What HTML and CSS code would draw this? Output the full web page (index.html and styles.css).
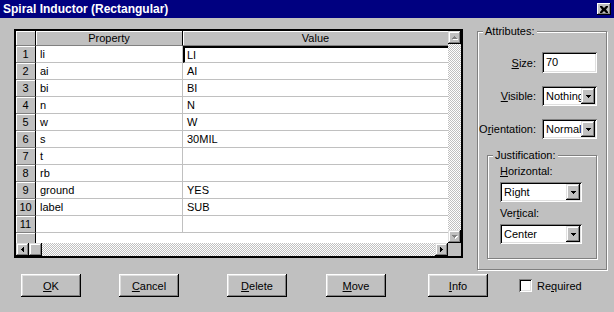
FILE: index.html
```html
<!DOCTYPE html>
<html lang="en">
<head>
    <meta charset="UTF-8">
    <title>Spiral Inductor (Rectangular)</title>
    <link rel="stylesheet" href="styles.css">
</head>
<body>
    <div class="window">
        <div class="titlebar">
            <span class="title">Spiral Inductor (Rectangular)</span>
            <span class="close">
                <svg width="8" height="7" viewBox="0 0 8 7"><path d="M0 0h2l2 2 2-2h2v1L6 3.5 8 6v1H6L4 5 2 7H0V6l2-2.5L0 1z" fill="#000"/></svg>
            </span>
        </div>

        <div class="content">
            <div class="upper">
                <!-- property grid -->
                <div class="grid">
                    <div class="grid-top">
                        <div class="table">
                            <div class="corner"></div>
                            <div class="hc prop">Property</div>
                            <div class="hc val">Value</div>

                            <div class="rh">1</div><div class="c prop">li</div><div class="c val edit">LI</div>
                            <div class="rh">2</div><div class="c prop">ai</div><div class="c val">AI</div>
                            <div class="rh">3</div><div class="c prop">bi</div><div class="c val">BI</div>
                            <div class="rh">4</div><div class="c prop">n</div><div class="c val">N</div>
                            <div class="rh">5</div><div class="c prop">w</div><div class="c val">W</div>
                            <div class="rh">6</div><div class="c prop">s</div><div class="c val">30MIL</div>
                            <div class="rh">7</div><div class="c prop">t</div><div class="c val"></div>
                            <div class="rh">8</div><div class="c prop">rb</div><div class="c val"></div>
                            <div class="rh">9</div><div class="c prop">ground</div><div class="c val">YES</div>
                            <div class="rh">10</div><div class="c prop">label</div><div class="c val">SUB</div>
                            <div class="rh">11</div><div class="c prop"></div><div class="c val"></div>

                            <div class="rh fill"></div>
                            <div class="c-fill"></div>
                        </div>
                        <div class="vscroll">
                            <div class="sb-btn">
                                <svg width="6" height="4" viewBox="0 0 6 4"><path d="M3 1h1v1H3zM2 2h3v1H2zM1 3h5v1H1z" fill="#fff"/><path d="M2 0h1v1H2zM1 1h3v1H1zM0 2h5v1H0z" fill="#808080"/></svg>
                            </div>
                            <div class="track"></div>
                            <div class="sb-btn">
                                <svg width="6" height="4" viewBox="0 0 6 4"><path d="M1 1h5v1H1zM2 2h3v1H2zM3 3h1v1H3z" fill="#fff"/><path d="M0 0h5v1H0zM1 1h3v1H1zM2 2h1v1H2z" fill="#808080"/></svg>
                            </div>
                        </div>
                    </div>
                    <div class="hscroll">
                        <div class="sb-btn">
                            <svg width="3" height="5" viewBox="0 0 3 5"><path d="M0 2h1v1H0zM1 1h1v3H1zM2 0h1v5H2z" fill="#000"/></svg>
                        </div>
                        <div class="sb-btn thumb"></div>
                        <div class="track"></div>
                        <div class="sb-btn">
                            <svg width="3" height="5" viewBox="0 0 3 5"><path d="M0 0h1v5H0zM1 1h1v3H1zM2 2h1v1H2z" fill="#000"/></svg>
                        </div>
                        <div class="sb-corner"></div>
                    </div>
                </div>

                <!-- attributes panel -->
                <div class="group attrs">
                    <div class="group-title">Attributes:</div>

                    <div class="field-row size-row">
                        <span class="label"><u>S</u>ize:</span>
                        <div class="field text-field">70</div>
                    </div>
                    <div class="field-row">
                        <span class="label"><u>V</u>isible:</span>
                        <div class="field select small">
                            <span class="select-text">Nothing</span>
                            <span class="drop-btn"><svg width="5" height="3" viewBox="0 0 5 3"><path d="M0 0h5v1H0zM1 1h3v1H1zM2 2h1v1H2z" fill="#000"/></svg></span>
                        </div>
                    </div>
                    <div class="field-row">
                        <span class="label">O<u>r</u>ientation:</span>
                        <div class="field select small">
                            <span class="select-text">Normal</span>
                            <span class="drop-btn"><svg width="5" height="3" viewBox="0 0 5 3"><path d="M0 0h5v1H0zM1 1h3v1H1zM2 2h1v1H2z" fill="#000"/></svg></span>
                        </div>
                    </div>

                    <div class="group justify">
                        <div class="group-title">Justification:</div>
                        <div class="sub-label"><u>H</u>orizontal:</div>
                        <div class="field select wide">
                            <span class="select-text">Right</span>
                            <span class="drop-btn"><svg width="5" height="3" viewBox="0 0 5 3"><path d="M0 0h5v1H0zM1 1h3v1H1zM2 2h1v1H2z" fill="#000"/></svg></span>
                        </div>
                        <div class="sub-label vert">Ver<u>t</u>ical:</div>
                        <div class="field select wide">
                            <span class="select-text">Center</span>
                            <span class="drop-btn"><svg width="5" height="3" viewBox="0 0 5 3"><path d="M0 0h5v1H0zM1 1h3v1H1zM2 2h1v1H2z" fill="#000"/></svg></span>
                        </div>
                    </div>
                </div>
            </div>

            <div class="btn-row">
                <button class="btn b-ok"><u>O</u>K</button>
                <button class="btn b-cancel"><u>C</u>ancel</button>
                <button class="btn b-delete"><u>D</u>elete</button>
                <button class="btn b-move"><u>M</u>ove</button>
                <button class="btn b-info"><u>I</u>nfo</button>
                <label class="check"><span class="check-box"></span>Re<u>q</u>uired</label>
            </div>
        </div>
    </div>
</body>
</html>
```

FILE: styles.css
```css
* {
    box-sizing: border-box;
}

body {
    margin: 0;
    background-color: #c0c0c0;
    font-family: "Liberation Sans", Arial, sans-serif;
    font-size: 11px;
    color: #000;
}

.window {
    width: 614px;
    height: 312px;
    overflow: hidden;
}

/* title bar */
.titlebar {
    height: 18px;
    background-color: #000080;
    color: #fff;
    display: flex;
    align-items: center;
    justify-content: space-between;
    padding: 0 3px 0 3px;
}

.title {
    font-weight: bold;
    font-size: 12px;
}

.close {
    width: 14px;
    height: 12px;
    background-color: #c0c0c0;
    display: flex;
    align-items: center;
    justify-content: center;
    box-shadow: inset -1px -1px #000, inset 1px 1px #fff, inset -2px -2px #808080;
}

.content {
    padding: 11px 0 0 14px;
}

.upper {
    display: flex;
    align-items: flex-start;
}

/* grid */
.grid {
    width: 449px;
    height: 229px;
    border: 2px solid #000;
    background-color: #fff;
    display: flex;
    flex-direction: column;
}

.grid-top {
    display: flex;
    height: 212px;
}

.table {
    display: grid;
    grid-template-columns: 20px 147px 265px;
    grid-template-rows: 15px repeat(11, 17px) 10px;
}

.corner,
.rh {
    background-color: #c0c0c0;
    border-right: 1px solid #000;
    border-bottom: 1px solid #808080;
    box-shadow: inset 1px 1px #fff;
    text-align: center;
    line-height: 16px;
}

.rh.fill {
    border-bottom: none;
}

.hc {
    background-color: #c0c0c0;
    border-bottom: 1px solid #808080;
    box-shadow: inset 1px 1px #fff;
    text-align: center;
    line-height: 14px;
}

.hc.prop {
    border-right: 1px solid #000;
}

.c {
    border-bottom: 1px solid #c0c0c0;
    padding-left: 4px;
    line-height: 16px;
    white-space: nowrap;
    overflow: hidden;
}

.c.prop {
    border-right: 1px solid #c0c0c0;
}

.c.edit {
    border-top: 2px solid #000;
    border-left: 2px solid #000;
    padding-left: 2px;
    line-height: 14px;
}

.c-fill {
    grid-column: span 2;
}

/* scroll bars */
.vscroll {
    width: 13px;
    display: flex;
    flex-direction: column;
}

.hscroll {
    height: 13px;
    display: flex;
}

.sb-btn {
    width: 13px;
    height: 13px;
    flex: none;
    background-color: #c0c0c0;
    display: flex;
    align-items: center;
    justify-content: center;
    box-shadow: inset -1px -1px #000, inset 1px 1px #dfdfdf, inset -2px -2px #808080, inset 2px 2px #fff;
}

.track {
    flex: 1;
    background: repeating-conic-gradient(#fff 0 25%, #c0c0c0 0 50%) 0 0 / 2px 2px;
}

.sb-corner {
    width: 13px;
    background-color: #c0c0c0;
}

/* group boxes */
.group {
    border: 1px solid #808080;
    box-shadow: inset 1px 1px #fff, 1px 1px #fff;
}

.group-title {
    width: fit-content;
    margin: -7px 0 0 5px;
    padding: 0 2px;
    line-height: 13px;
    background-color: #c0c0c0;
}

.attrs {
    width: 130px;
    height: 239px;
    margin: 2px 0 0 14px;
}

.field-row {
    display: flex;
    align-items: center;
    margin-top: 13px;
}

.field-row.size-row {
    margin-top: 14px;
}

.label {
    width: 58px;
    margin-right: 6px;
    text-align: right;
}

.field {
    background-color: #fff;
    box-shadow: inset 1px 1px #808080, inset -1px -1px #fff, inset 2px 2px #000, inset -2px -2px #dfdfdf;
}

.text-field {
    width: 55px;
    height: 21px;
    padding-left: 4px;
    line-height: 21px;
}

.select {
    height: 20px;
    padding: 2px;
    display: flex;
}

.select.small {
    width: 55px;
}

.select.wide {
    width: 82px;
    margin: 4px 0 0 12px;
}

.select-text {
    flex: 1;
    min-width: 0;
    padding-left: 2px;
    line-height: 16px;
    white-space: nowrap;
    overflow: hidden;
}

.drop-btn {
    width: 14px;
    flex: none;
    background-color: #c0c0c0;
    display: flex;
    align-items: center;
    justify-content: center;
    box-shadow: inset -1px -1px #000, inset 1px 1px #dfdfdf, inset -2px -2px #808080, inset 2px 2px #fff;
}

.justify {
    margin: 16px 9px 0 9px;
    padding-bottom: 14px;
}

.sub-label {
    margin: 3px 0 0 12px;
    line-height: 13px;
}

.sub-label.vert {
    margin-top: 5px;
}

/* buttons */
.btn-row {
    display: flex;
    align-items: center;
    margin: 4px 0 0 7px;
}

.btn {
    width: 60px;
    height: 23px;
    padding: 0;
    border: none;
    background-color: #c0c0c0;
    font: inherit;
    color: #000;
    box-shadow: inset -1px -1px #000, inset 1px 1px #fff, inset -2px -2px #808080, inset 2px 2px #dfdfdf;
}

.b-ok { margin-right: 38px; }
.b-cancel { margin-right: 48px; }
.b-delete { margin-right: 39px; }
.b-move { margin-right: 42px; }
.b-info { margin-right: 31px; }

.check {
    display: flex;
    align-items: center;
}

.check-box {
    width: 13px;
    height: 13px;
    margin-right: 5px;
    background-color: #fff;
    box-shadow: inset 1px 1px #808080, inset -1px -1px #fff, inset 2px 2px #000, inset -2px -2px #dfdfdf;
}
```
